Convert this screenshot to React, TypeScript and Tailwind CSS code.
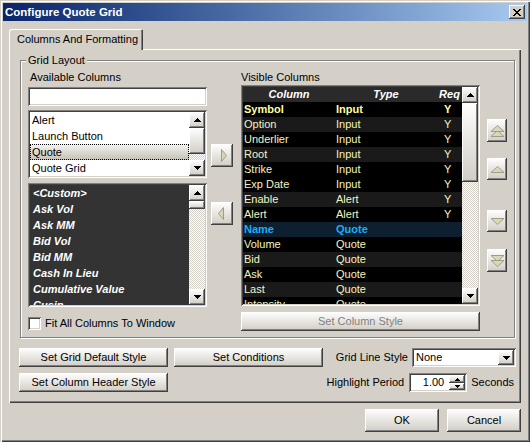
import React from "react";

const raised = "shadow-[inset_-1px_-1px_#404040,inset_1px_1px_#ffffff,inset_-2px_-2px_#808080]";
const sunken = "shadow-[inset_1px_1px_#808080,inset_-1px_-1px_#ffffff,inset_2px_2px_#404040,inset_-2px_-2px_#d4d0c8]";
const btnBg = "bg-linear-to-b from-[#ffffff] to-[#d0ccc3]";
const checker = "bg-[image:repeating-conic-gradient(#ffffff_0_25%,#d4d0c8_0_50%)] bg-[length:2px_2px]";

function Arrow({ dir, w = 7 }: { dir: "up" | "down"; w?: number }) {
  const rows = Math.ceil(w / 2);
  const rects = [];
  for (let i = 0; i < rows; i++) {
    const width = 1 + 2 * i;
    const x = (w - width) / 2;
    const y = dir === "up" ? i : rows - 1 - i;
    rects.push(<rect key={i} x={x} y={y} width={width} height={1} />);
  }
  return (
    <svg width={w} height={rows} viewBox={`0 0 ${w} ${rows}`} shapeRendering="crispEdges" fill="#000">
      {rects}
    </svg>
  );
}

function SBtn({ dir }: { dir: "up" | "down" }) {
  return (
    <div className={`w-[16px] h-[16px] shrink-0 flex items-center justify-center ${btnBg} ${raised}`}>
      <Arrow dir={dir} />
    </div>
  );
}

function Scrollbar({ thumb }: { thumb: string }) {
  return (
    <div className="w-[16px] flex flex-col shrink-0 h-full">
      <SBtn dir="up" />
      <div className={`${thumb} w-[16px] shrink-0 ${btnBg} ${raised}`} />
      <div className={`flex-1 ${checker}`} />
      <SBtn dir="down" />
    </div>
  );
}

function CloseGlyph() {
  const px = [
    "XX....XX",
    ".XX..XX.",
    "..XXXX..",
    "...XX...",
    "..XXXX..",
    ".XX..XX.",
    "XX....XX",
  ];
  const rects: React.ReactNode[] = [];
  px.forEach((r, y) =>
    r.split("").forEach((c, x) => {
      if (c === "X") rects.push(<rect key={`${x}-${y}`} x={x} y={y} width={1} height={1} />);
    })
  );
  return (
    <svg width="8" height="7" viewBox="0 0 8 7" shapeRendering="crispEdges" fill="#000">
      {rects}
    </svg>
  );
}

const triFill = "#dad6b8";
const triStroke = "#a09c88";

function MoveBtn({ dir }: { dir: "left" | "right" }) {
  return (
    <div className={`w-[22px] h-[23px] flex items-center justify-center ${btnBg} ${raised}`}>
      <svg width="8" height="15" viewBox="0 0 8 15" className={dir === "right" ? "ml-[3px]" : "mr-[2px]"}>
        {dir === "right" ? (
          <polygon points="1.5,1.5 6.5,7.5 1.5,13.5" fill={triFill} stroke={triStroke} strokeWidth="1" />
        ) : (
          <polygon points="6.5,1.5 1.5,7.5 6.5,13.5" fill={triFill} stroke={triStroke} strokeWidth="1" />
        )}
      </svg>
    </div>
  );
}

function OrderBtn({ kind, h }: { kind: "top" | "up" | "down" | "bottom"; h: string }) {
  let shapes: React.ReactNode = null;
  if (kind === "up") shapes = <polygon points="7.5,0.5 14,6.5 1,6.5" fill={triFill} stroke={triStroke} />;
  if (kind === "down") shapes = <polygon points="1,0.5 14,0.5 7.5,6.5" fill={triFill} stroke={triStroke} />;
  if (kind === "top")
    shapes = (
      <>
        <polygon points="7.5,5.5 14,11.5 1,11.5" fill={triFill} stroke={triStroke} />
        <polygon points="7.5,0.5 14,6.5 1,6.5" fill={triFill} stroke={triStroke} />
      </>
    );
  if (kind === "bottom")
    shapes = (
      <>
        <polygon points="1,0.5 14,0.5 7.5,6.5" fill={triFill} stroke={triStroke} />
        <polygon points="1,5.5 14,5.5 7.5,11.5" fill={triFill} stroke={triStroke} />
      </>
    );
  const single = kind === "up" || kind === "down";
  return (
    <div className={`w-[20px] ${h} flex items-center justify-center ${btnBg} ${raised}`}>
      <svg width="15" height={single ? 7 : 12} viewBox={`0 0 15 ${single ? 7 : 12}`}>
        {shapes}
      </svg>
    </div>
  );
}

function Button({ children, w, h = "h-[19px]", disabled }: { children: React.ReactNode; w: string; h?: string; disabled?: boolean }) {
  return (
    <div className={`${w} ${h} flex items-center justify-center ${btnBg} ${raised} ${disabled ? "text-[#808080]" : "text-black"}`}>
      {children}
    </div>
  );
}

const gridRows = [
  { c: "Symbol", t: "Input", r: "Y", bg: "bg-black", tx: "text-[#ffffa0] font-bold" },
  { c: "Option", t: "Input", r: "Y", bg: "bg-[#1a1a1a]", tx: "text-[#f4f4c0]" },
  { c: "Underlier", t: "Input", r: "Y", bg: "bg-black", tx: "text-[#f4f4c0]" },
  { c: "Root", t: "Input", r: "Y", bg: "bg-[#1a1a1a]", tx: "text-[#f4f4c0]" },
  { c: "Strike", t: "Input", r: "Y", bg: "bg-black", tx: "text-[#f4f4c0]" },
  { c: "Exp Date", t: "Input", r: "Y", bg: "bg-black", tx: "text-[#f4f4c0]" },
  { c: "Enable", t: "Alert", r: "Y", bg: "bg-[#1a1a1a]", tx: "text-[#f4f4c0]" },
  { c: "Alert", t: "Alert", r: "Y", bg: "bg-black", tx: "text-[#f4f4c0]" },
  { c: "Name", t: "Quote", r: "", bg: "bg-[#0e2030]", tx: "text-[#18b0f8] font-bold" },
  { c: "Volume", t: "Quote", r: "", bg: "bg-black", tx: "text-[#f4f4c0]" },
  { c: "Bid", t: "Quote", r: "", bg: "bg-[#1a1a1a]", tx: "text-[#f4f4c0]" },
  { c: "Ask", t: "Quote", r: "", bg: "bg-black", tx: "text-[#f4f4c0]" },
  { c: "Last", t: "Quote", r: "", bg: "bg-[#1a1a1a]", tx: "text-[#f4f4c0]" },
  { c: "Intensity", t: "Quote", r: "", bg: "bg-black", tx: "text-[#f4f4c0]" },
];

const customItems = ["<Custom>", "Ask Vol", "Ask MM", "Bid Vol", "Bid MM", "Cash In Lieu", "Cumulative Value", "Cusip"];

export default function App() {
  return (
    <div className="w-[530px] h-[442px] bg-[#d4d0c8] p-[3px] flex flex-col font-['Liberation_Sans',Arial,sans-serif] text-[11px] leading-[13px] text-black shadow-[inset_1px_1px_#d4d0c8,inset_2px_2px_#ffffff,inset_-1px_-1px_#404040,inset_-2px_-2px_#808080] select-none">
      {/* Title bar */}
      <div className="h-[18px] shrink-0 flex items-center bg-linear-to-r from-[#0a246a] to-[#a6caf0] pl-[2px] pr-[2px]">
        <span className="text-white font-bold text-[11.5px] leading-[14px]">Configure Quote Grid</span>
        <div className={`ml-auto w-[16px] h-[14px] flex items-center justify-center bg-[#d4d0c8] ${raised}`}>
          <CloseGlyph />
        </div>
      </div>

      {/* Tab header */}
      <div className="mt-[8px] ml-[6px] w-[134px] h-[21px] -mb-px relative z-10 bg-[#d4d0c8] flex items-center pl-[8px] rounded-t-[2px] shadow-[inset_1px_1px_#ffffff,inset_-1px_0_#404040,inset_-2px_0_#808080]">
        Columns And Formatting
      </div>

      {/* Tab panel */}
      <div className="ml-[6px] w-[512px] h-[354px] shrink-0 flex flex-col shadow-[inset_1px_1px_#ffffff,inset_-1px_-1px_#404040,inset_-2px_-2px_#808080]">
        {/* Group box */}
        <div className="mt-[11px] ml-[11px] w-[495px] h-[278px] shrink-0 relative border border-[#808080] shadow-[inset_1px_1px_#ffffff,1px_1px_#ffffff] flex pt-[10px] pl-[7px]">
          <div className="absolute -top-[7px] left-[5px] px-[2px] bg-[#d4d0c8]">Grid Layout</div>

          {/* Left column */}
          <div className="w-[179px] flex flex-col">
            <div className="h-[13px] pl-[2px]">Available Columns</div>
            <div className={`mt-[3px] h-[19px] bg-white ${sunken}`} />
            <div className={`mt-[4px] h-[68px] bg-white p-[2px] flex ${sunken}`}>
              <div className="flex-1 flex flex-col leading-[16px]">
                <div className="h-[16px] pl-[2px]">Alert</div>
                <div className="h-[16px] pl-[2px]">Launch Button</div>
                <div className="h-[16px] pl-[2px] bg-linear-to-b from-[#f6f5f2] to-[#c4c0b6] outline-1 outline-dotted outline-black -outline-offset-1">Quote</div>
                <div className="h-[16px] pl-[2px]">Quote Grid</div>
              </div>
              <Scrollbar thumb="h-[26px]" />
            </div>
            <div className={`mt-[5px] h-[124px] bg-[#333333] p-[2px] flex ${sunken}`}>
              <div className="flex-1 flex flex-col overflow-hidden leading-[16px] text-white font-bold italic">
                {customItems.map((s) => (
                  <div key={s} className="h-[16px] shrink-0 pl-[3px]">{s}</div>
                ))}
              </div>
              <Scrollbar thumb="h-[8px]" />
            </div>
            <div className="mt-[10px] flex items-center h-[13px]">
              <div className={`w-[13px] h-[13px] bg-white ${sunken}`} />
              <span className="ml-[4px]">Fit All Columns To Window</span>
            </div>
          </div>

          {/* Middle column */}
          <div className="ml-[4px] w-[22px] flex flex-col">
            <div className="mt-[73px]"><MoveBtn dir="right" /></div>
            <div className="mt-[35px]"><MoveBtn dir="left" /></div>
          </div>

          {/* Right column */}
          <div className="ml-[8px] w-[239px] flex flex-col">
            <div className="h-[13px]">Visible Columns</div>
            <div className={`mt-[1px] h-[221px] bg-black p-[2px] flex ${sunken}`}>
              <div className="flex-1 flex flex-col overflow-hidden leading-[15px]">
                <div className="h-[15px] shrink-0 flex bg-[#2a2a2a] text-white font-bold italic">
                  <div className="w-[92px] text-center">Column</div>
                  <div className="w-[102px] text-center">Type</div>
                  <div className="w-[25px] text-center">Req</div>
                </div>
                {gridRows.map((r) => (
                  <div key={r.c} className={`h-[15px] shrink-0 flex ${r.bg} ${r.tx}`}>
                    <div className="w-[92px] pl-[1px]">{r.c}</div>
                    <div className="w-[102px] pl-[1px]">{r.t}</div>
                    <div className="w-[25px] pl-[7px]">{r.r}</div>
                  </div>
                ))}
              </div>
              <Scrollbar thumb="h-[79px]" />
            </div>
            <div className="mt-[6px]">
              <Button w="w-[239px]" disabled>Set Column Style</Button>
            </div>
          </div>

          {/* Far column */}
          <div className="ml-[7px] w-[20px] flex flex-col">
            <div className="mt-[48px]"><OrderBtn kind="top" h="h-[23px]" /></div>
            <div className="mt-[16px]"><OrderBtn kind="up" h="h-[22px]" /></div>
            <div className="mt-[30px]"><OrderBtn kind="down" h="h-[22px]" /></div>
            <div className="mt-[17px]"><OrderBtn kind="bottom" h="h-[23px]" /></div>
          </div>
        </div>

        {/* Bottom controls */}
        <div className="mt-[10px] ml-[10px] w-[497px] flex flex-col">
          <div className="h-[19px] flex items-center">
            <Button w="w-[149px]">Set Grid Default Style</Button>
            <div className="ml-[6px]"><Button w="w-[149px]">Set Conditions</Button></div>
            <span className="ml-auto">Grid Line Style</span>
            <div className={`ml-[4px] w-[104px] h-[19px] bg-white p-[2px] flex items-center ${sunken}`}>
              <span className="flex-1 pl-[2px]">None</span>
              <div className={`w-[16px] h-[15px] flex items-center justify-center ${btnBg} ${raised}`}>
                <Arrow dir="down" />
              </div>
            </div>
          </div>
          <div className="mt-[6px] h-[19px] flex items-center">
            <Button w="w-[149px]">Set Column Header Style</Button>
            <span className="ml-auto">Highlight Period</span>
            <div className={`ml-[5px] w-[58px] h-[19px] bg-white p-[2px] flex items-center ${sunken}`}>
              <span className="flex-1 text-right pr-[5px]">1.00</span>
              <div className="w-[16px] h-[15px] flex flex-col">
                <div className={`h-[8px] flex items-center justify-center ${btnBg} ${raised}`}>
                  <Arrow dir="up" w={5} />
                </div>
                <div className={`h-[7px] flex items-center justify-center ${btnBg} ${raised}`}>
                  <Arrow dir="down" w={5} />
                </div>
              </div>
            </div>
            <span className="ml-[4px] mr-[2px]">Seconds</span>
          </div>
        </div>
      </div>

      {/* OK / Cancel */}
      <div className="mt-[6px] flex justify-end gap-[8px] pr-[6px]">
        <Button w="w-[74px]" h="h-[23px]">OK</Button>
        <Button w="w-[74px]" h="h-[23px]">Cancel</Button>
      </div>
    </div>
  );
}
